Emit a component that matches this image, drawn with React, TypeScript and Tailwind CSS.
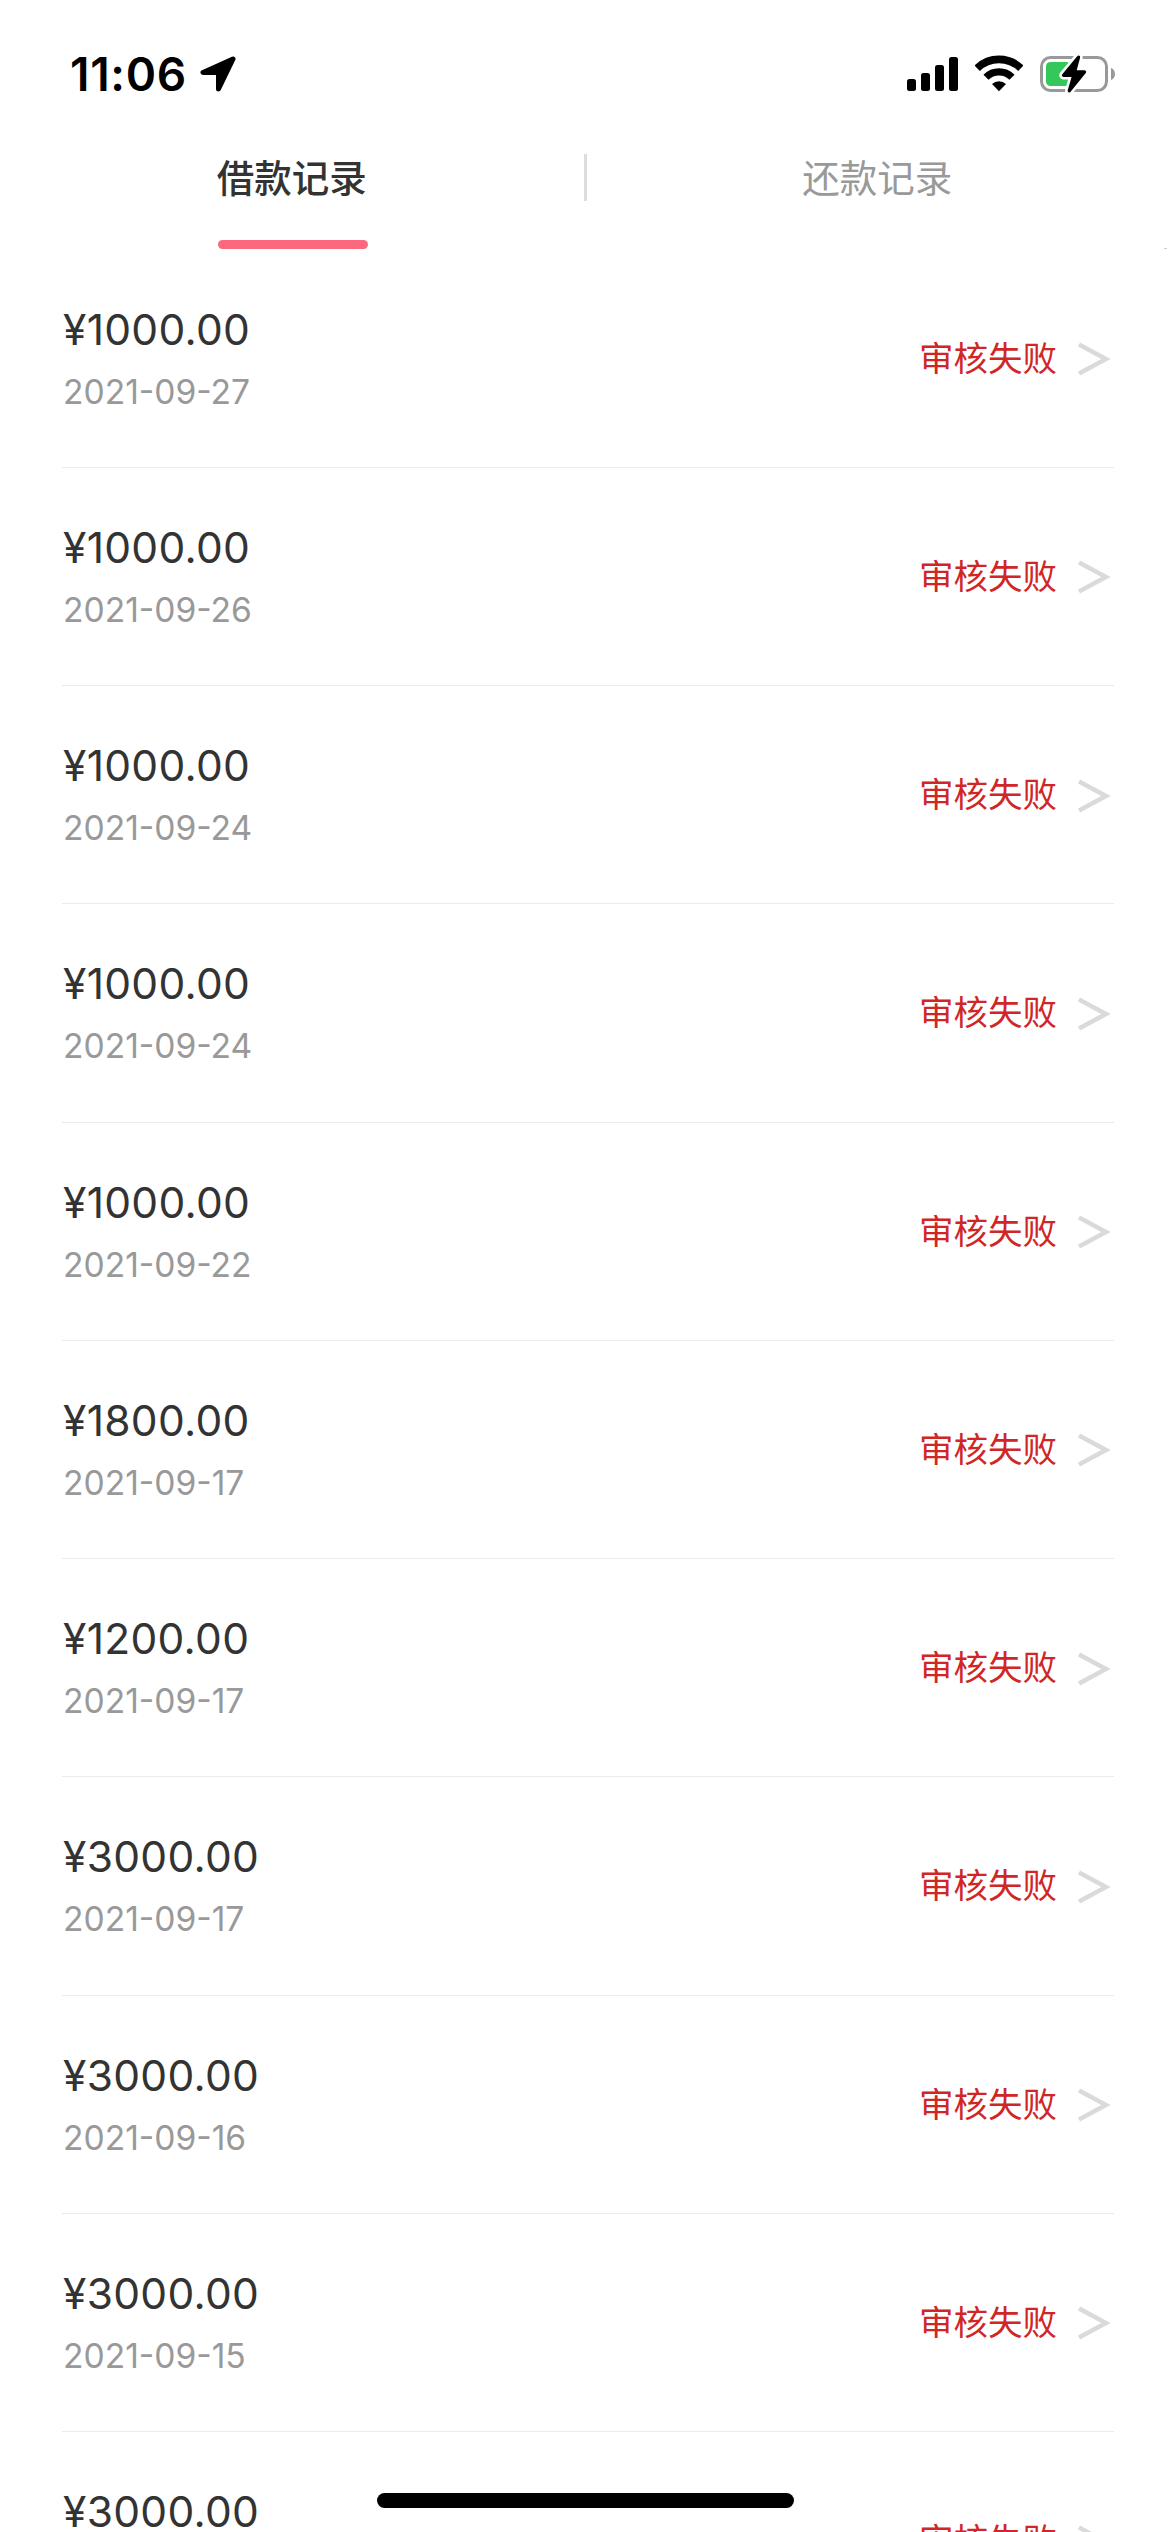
const rows = [
  { amount: '¥1000.00', date: '2021-09-27' },
  { amount: '¥1000.00', date: '2021-09-26' },
  { amount: '¥1000.00', date: '2021-09-24' },
  { amount: '¥1000.00', date: '2021-09-24' },
  { amount: '¥1000.00', date: '2021-09-22' },
  { amount: '¥1800.00', date: '2021-09-17' },
  { amount: '¥1200.00', date: '2021-09-17' },
  { amount: '¥3000.00', date: '2021-09-17' },
  { amount: '¥3000.00', date: '2021-09-16' },
  { amount: '¥3000.00', date: '2021-09-15' },
  { amount: '¥3000.00', date: '2021-09-15' },
];

function StatusIcons() {
  return (
    <div className="flex items-center">
      <svg className="mr-[17px]" width="51" height="36" viewBox="0 0 51 36">
        <rect y="23" width="9" height="12" rx="2.5" />
        <rect x="14" y="17" width="9" height="18" rx="2.5" />
        <rect x="28" y="9" width="9" height="26" rx="2.5" />
        <rect x="42" y="1" width="9" height="34" rx="2.5" />
      </svg>
      <svg className="mr-[17px]" width="48" height="38" viewBox="0 0 48 38" fill="none" stroke="#000">
        <path d="M2.2 13.2a31.4 31.4 0 0 1 43.6 0" strokeWidth="7.6" />
        <path d="M11 22.2a18.3 18.3 0 0 1 26 0" strokeWidth="7.2" />
        <path d="M24 36.2 17 29a10.5 10.5 0 0 1 14 0Z" fill="#000" stroke="none" />
      </svg>
      <svg width="76" height="38" viewBox="0 0 76 38">
        <rect x="1.5" y="2.5" width="65" height="33" rx="9" fill="none" stroke="#999" strokeWidth="3" />
        <path d="M71 13c5.3 1.5 5.3 10.5 0 12Z" fill="#999" />
        <rect x="6" y="7" width="25" height="24" rx="4.5" fill="#34c759" />
        <path d="M38.5 2.2 23.5 20.3h10.3L29.3 35.8 44.5 17H34.5Z" fill="#000" stroke="#fff" strokeWidth="8.5" strokeLinejoin="round" />
        <path d="M38.5 2.2 23.5 20.3h10.3L29.3 35.8 44.5 17H34.5Z" fill="#000" stroke="#000" strokeWidth="3.3" strokeLinejoin="round" />
      </svg>
    </div>
  );
}

export default function App() {
  return (
    <div className="relative h-[2532px] w-[1170px] overflow-hidden bg-white font-[Inter,'Noto_Sans_CJK_SC',sans-serif] text-[#333]">
      <header className="flex h-[140px] items-center justify-between pt-[8px] pr-[54px] pl-[70px] text-black">
        <div className="flex items-center gap-[13px]">
          <span className="text-[46px] font-semibold tracking-[0.7px]">11:06</span>
          <svg width="36" height="36" viewBox="0 0 36 36">
            <path d="M33 3 3 16.5H18.5V33Z" stroke="#000" strokeWidth="5" strokeLinejoin="round" />
          </svg>
        </div>
        <StatusIcons />
      </header>
      <nav className="relative flex h-[109px] text-[37.5px] leading-[56px]">
        <div className="flex flex-1 flex-col items-center justify-between pt-[11px] pl-[2px] font-medium">
          <span className="pr-[2px]">借款记录</span>
          <span className="h-[9px] w-[150px] rounded-full bg-[#fc697e]" />
        </div>
        <div className="mt-[14px] h-[47px] w-[3px] bg-[#ddd]" />
        <div className="flex flex-1 justify-center pt-[11px] pr-[2px] text-[#999]">还款记录</div>
        <span className="absolute right-[3px] bottom-0 h-px w-[3px] bg-[#ccc]" />
      </nav>
      <main className="pt-[0.5px]">
        {rows.map(({ amount, date }, i) => (
          <div key={i} className="mr-[56px] ml-[62px] flex h-[218.25px] justify-between border-b border-[#ebebeb]">
            <div className="pt-[55px] pl-px">
              <div className="text-[42.5px] leading-[50px] tracking-[0.3px]">{amount}</div>
              <div className="mt-[12px] text-[33.6px] leading-[50px] text-[#999]">{date}</div>
            </div>
            <div className="mt-[84px] flex h-[50px] items-center text-[34.5px] leading-[50px] text-[#d02626]">
              <span>审核失败</span>
              <svg className="mt-px mr-[3px] ml-[20px]" width="34" height="34" viewBox="0 0 34 34" fill="none" stroke="#dadada" strokeWidth="4.5">
                <path d="M2 2.5 29 17 2 31.5" />
              </svg>
            </div>
          </div>
        ))}
      </main>
      <div className="absolute bottom-[24px] left-[377px] h-[15px] w-[417px] rounded-full bg-black" />
    </div>
  );
}
